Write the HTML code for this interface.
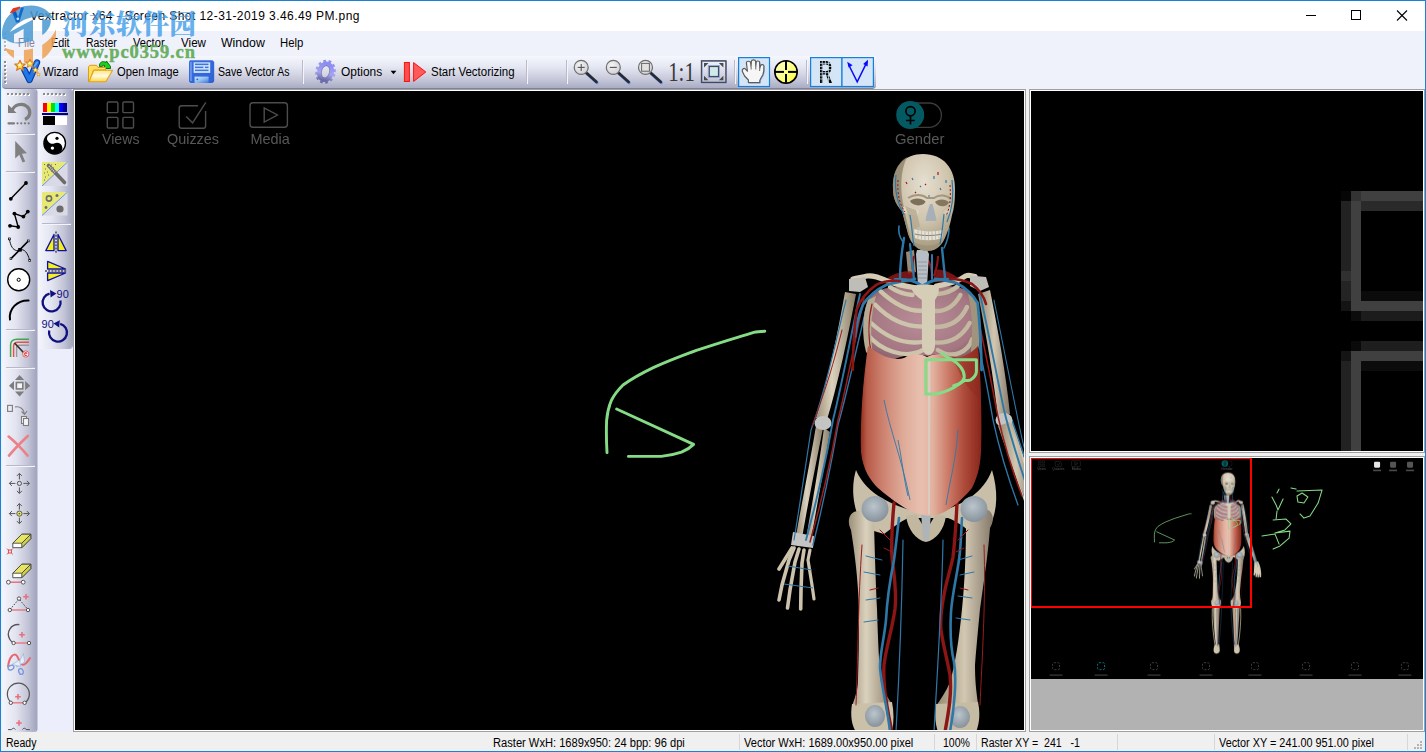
<!DOCTYPE html>
<html lang="en">
<head>
<meta charset="utf-8">
<title>Vextractor x64 - Screen Shot 12-31-2019 3.46.49 PM.png</title>
<style>
html,body{margin:0;padding:0;}
body{width:1426px;height:752px;overflow:hidden;position:relative;background:#eff1fb;font-family:"Liberation Sans","Noto Sans CJK SC",sans-serif;font-size:12px;color:#000;}
.abs{position:absolute;}
#win{position:absolute;left:0;top:0;width:1424px;height:750px;border:1px solid #1883d7;}
#title{position:absolute;left:1px;top:1px;width:1424px;height:30px;background:#fff;}
#menubar{position:absolute;left:1px;top:31px;width:1424px;height:25px;background:#eff1fb;}
#tbrow{position:absolute;left:1px;top:56px;width:1424px;height:33px;background:#eff1fb;}
#tb{position:absolute;left:2px;top:56px;width:874px;height:33px;background:linear-gradient(#f6f7fd 0%,#e4e6f2 35%,#c9cbdc 70%,#a9acc4 100%);border-radius:0 0 4px 4px;border-bottom:1px solid #7f829c;box-sizing:border-box;}
.t{position:absolute;transform-origin:0 0;white-space:nowrap;line-height:14px;height:14px;}
.sep{position:absolute;width:1px;background:#b9bbcc;box-shadow:1px 0 0 #f4f5fb;}
#ltb1{position:absolute;left:2px;top:89px;width:34px;height:643px;border-radius:0 3px 3px 0;box-shadow:1.5px 0 0 #a3a6be;background:linear-gradient(90deg,#f4f5fc 0%,#e2e4f0 40%,#c4c6d8 75%,#a3a6bf 100%);}
#ltb2{position:absolute;left:38px;top:89px;width:34px;height:260px;box-shadow:1px 0 0 #a3a6be;background:linear-gradient(90deg,#f4f5fc 0%,#e2e4f0 40%,#c4c6d8 75%,#a3a6bf 100%);border-radius:0 3px 4px 0;}
#ltbbg{position:absolute;left:1px;top:89px;width:73px;height:643px;background:#eceefb;}
#canvas{position:absolute;left:75px;top:91px;width:949px;height:639px;background:#000;}
#canvasb{position:absolute;left:74px;top:90px;width:951px;height:641px;background:#fff;}
#canvasb0{position:absolute;left:73px;top:89px;width:953px;height:643px;background:#a0a0a0;}
#split{position:absolute;left:1026px;top:89px;width:3px;height:643px;background:#f0f0f0;}
#p1b0{position:absolute;left:1029px;top:89px;width:396px;height:364px;background:#a0a0a0;}
#p1b{position:absolute;left:1030px;top:90px;width:394px;height:362px;background:#fff;}
#p1{position:absolute;left:1031px;top:91px;width:392px;height:360px;background:#000;overflow:hidden;}
#hsplit{position:absolute;left:1029px;top:453px;width:396px;height:3px;background:#f0f0f0;}
#p2b0{position:absolute;left:1029px;top:456px;width:396px;height:276px;background:#a0a0a0;}
#p2b{position:absolute;left:1030px;top:457px;width:394px;height:274px;background:#fff;}
#p2{position:absolute;left:1031px;top:458px;width:392px;height:272px;background:#b2b2b2;overflow:hidden;}
#p2k{position:absolute;left:0;top:0;width:392px;height:221px;background:#000;}
#status{position:absolute;left:1px;top:732px;width:1424px;height:19px;background:#f0f0f0;}
.ssep{position:absolute;top:734px;width:1px;height:16px;background:#d7d7d7;}
svg{position:absolute;left:0;top:0;overflow:visible;}
</style>
</head>
<body>
<div id="title"></div>
<div id="menubar"></div>
<div id="tbrow"></div>
<div id="tb"></div>
<div id="ltbbg"></div>
<div id="ltb1"></div>
<div id="ltb2"></div>
<div id="canvasb0"></div>
<div id="canvasb"></div>
<div id="canvas"></div>
<div id="split"></div>
<div id="p1b0"></div>
<div id="p1b"></div>
<div id="p1"></div>
<div id="hsplit"></div>
<div id="p2b0"></div>
<div id="p2b"></div>
<div id="p2"><div id="p2k"></div></div>
<div id="status"></div><div class="ssep" style="left:739px;"></div><div class="ssep" style="left:934px;"></div><div class="ssep" style="left:976px;"></div><div class="ssep" style="left:1117px;"></div><div class="ssep" style="left:1214px;"></div><div class="ssep" style="left:1407px;"></div><svg width="1426" height="752" viewBox="0 0 1426 752" shape-rendering="crispEdges"><g fill="#b4b4b4"><rect x="1420" y="741" width="2" height="2"/><rect x="1417" y="744" width="2" height="2"/><rect x="1420" y="744" width="2" height="2"/><rect x="1414" y="747" width="2" height="2"/><rect x="1417" y="747" width="2" height="2"/><rect x="1420" y="747" width="2" height="2"/></g></svg>


<!-- MAINGEN-START -->
<svg id="mainsvg" width="1426" height="752" viewBox="0 0 1426 752">
<defs>
<linearGradient id="gBoneL" x1="0" y1="0" x2="1" y2="0"><stop offset="0" stop-color="#9c9078"/><stop offset="0.4" stop-color="#dbd2be"/><stop offset="1" stop-color="#8a7e68"/></linearGradient>
<linearGradient id="gBoneR" x1="0" y1="0" x2="1" y2="0"><stop offset="0" stop-color="#94886f"/><stop offset="0.5" stop-color="#d2c8b2"/><stop offset="1" stop-color="#85796a"/></linearGradient>
<linearGradient id="gAbd" x1="0" y1="0" x2="1" y2="0"><stop offset="0" stop-color="#96301f"/><stop offset="0.05" stop-color="#b85a48"/><stop offset="0.2" stop-color="#cf8674"/><stop offset="0.36" stop-color="#e0ac9a"/><stop offset="0.5" stop-color="#e8c0b0"/><stop offset="0.6" stop-color="#e2b09e"/><stop offset="0.72" stop-color="#cd7c6a"/><stop offset="0.86" stop-color="#ad4a3a"/><stop offset="1" stop-color="#8a261c"/></linearGradient>
<radialGradient id="gSkull" cx="0.5" cy="0.3" r="0.72"><stop offset="0" stop-color="#e6dfd0"/><stop offset="0.55" stop-color="#cfc4ad"/><stop offset="1" stop-color="#a09479"/></radialGradient>
<radialGradient id="gLung" cx="0.5" cy="0.45" r="0.65"><stop offset="0" stop-color="#b88e99"/><stop offset="0.7" stop-color="#a47782"/><stop offset="1" stop-color="#7c5660"/></radialGradient>
<radialGradient id="gCart" cx="0.45" cy="0.4" r="0.7"><stop offset="0" stop-color="#bcc5cc"/><stop offset="1" stop-color="#7e8a94"/></radialGradient>

<clipPath id="cpMain"><rect x="75" y="91" width="949" height="639"/></clipPath>
<clipPath id="cpPrev"><rect x="1031" y="458" width="392" height="221"/></clipPath>
<filter id="fSoft" x="-5%" y="-5%" width="110%" height="110%"><feGaussianBlur stdDeviation="0.55"/></filter>
<g id="scene">
<g id="figure" filter="url(#fSoft)"><g id="figlow">
<path d="M860,730 C858,780 866,850 871,896 L882,896 C882,850 886,780 888,732 Z" fill="url(#gBoneL)"/>
<path d="M942,732 C946,780 948,850 952,896 L963,896 C967,850 972,780 974,730 Z" fill="url(#gBoneR)"/>
<path d="M856,738 C853,790 860,850 867,894" stroke="#a89c84" stroke-width="4" fill="none"/>
<path d="M978,738 C981,790 975,850 968,894" stroke="#a89c84" stroke-width="4" fill="none"/>
<path d="M866,894 L886,894 L888,915 C890,926 884,934 874,934 C864,934 860,926 862,912 Z" fill="#cfc4ac"/>
<path d="M950,894 L970,894 L974,912 C976,926 972,934 962,934 C952,934 948,926 950,915 Z" fill="#cfc4ac"/>
<path d="M880,740 C882,800 880,860 878,900 M956,740 C954,800 956,860 958,900" stroke="#9a1c1c" stroke-width="1.8" fill="none"/>
<path d="M874,740 C872,800 876,860 880,905 M964,740 C966,800 962,860 956,905 M896,734 C894,790 890,850 884,900 M936,734 C938,790 944,850 950,900" stroke="#2f78a8" stroke-width="1.5" fill="none"/>
<path d="M998,424 L1012,420 C1024,458 1038,500 1049,538 L1038,542 C1026,505 1010,462 998,424 Z" fill="url(#gBoneR)"/>
<path d="M1037,540 L1053,536 L1060,552 C1066,570 1068,590 1066,604 L1060,604 L1058,588 L1056,606 L1051,606 L1050,588 L1047,604 L1042,602 L1043,584 L1038,598 L1034,596 C1036,580 1036,560 1037,540 Z" fill="#d6ccb6"/>
<path d="M1008,424 C1020,462 1036,505 1046,545 M1012,420 C1026,462 1044,510 1052,560 M1002,428 C1016,470 1030,510 1040,548" stroke="#2f78a8" stroke-width="1.4" fill="none"/>
</g>
<g id="figtop">
<path d="M845,292 C838,332 828,380 816,418 L826,423 C838,384 848,336 856,294 Z" fill="url(#gBoneL)"/>
<path d="M816,426 C810,462 802,502 796,536 L802,538 C808,502 816,464 823,428 Z" fill="url(#gBoneL)"/>
<path d="M824,428 C819,466 812,504 806,539 L811,540 C817,505 824,468 830,432 Z" fill="url(#gBoneL)"/>
<ellipse cx="823" cy="423" rx="8.5" ry="7" fill="#c4c4c2"/>
<path d="M793,532 L814,536 L813,548 L791,545 Z" fill="#c4c4c2"/>
<g fill="none" stroke="#cdc3ac" stroke-linecap="round" stroke-linejoin="round">
<path d="M794,548 L789,560 L782,585 L779,600" stroke-width="3.6"/>
<path d="M799,549 L795,562 L790,590 L787.5,608" stroke-width="3.6"/>
<path d="M804,550 L802,563 L801,590 L800.7,609" stroke-width="3.6"/>
<path d="M810,550 L808,560 L812,585 L814,599" stroke-width="3.2"/>
<path d="M792,548 L787,556 L779,569" stroke-width="3.6"/>
</g>
<path d="M788,566 L812,570 M784,584 L813,588" stroke="#2f78a8" stroke-width="1.2" fill="none"/>
<path d="M978,294 C986,334 994,380 998,418 L1010,414 C1006,374 998,330 990,290 Z" fill="url(#gBoneR)"/>
<ellipse cx="1004" cy="420" rx="8.5" ry="7" fill="#c4c4c2"/>
<path d="M998,426 C1006,450 1016,476 1026,500 L1034,496 C1026,470 1018,446 1010,422 Z" fill="url(#gBoneR)"/>
<g fill="none" stroke-linecap="round">
<path d="M860,294 C852,330 843,380 833,420 C827,455 817,500 806,540" stroke="#2f78a8" stroke-width="1.9"/>
<path d="M868,302 C858,340 848,390 838,425 C832,460 823,505 813,545" stroke="#2f78a8" stroke-width="1.4"/>
<path d="M864,298 C856,335 847,385 838,420 C832,455 822,500 810,542" stroke="#9a1c1c" stroke-width="1.5"/>
<path d="M846,300 C836,340 826,390 811,430 C805,470 799,510 794,540" stroke="#2f78a8" stroke-width="1.2"/>
<path d="M842,330 C832,370 822,400 812,426" stroke="#9a1c1c" stroke-width="1"/>
<path d="M980,294 C988,330 996,372 1004,410 C1010,435 1018,460 1028,490" stroke="#2f78a8" stroke-width="1.9"/>
<path d="M974,300 C982,335 990,375 997,412 C1003,440 1011,468 1022,496" stroke="#9a1c1c" stroke-width="1.5"/>
<path d="M970,302 C978,340 987,385 993,420 C999,448 1007,475 1018,505" stroke="#2f78a8" stroke-width="1.3"/>
<path d="M994,300 C1002,340 1010,380 1016,410 C1020,430 1024,450 1030,470" stroke="#2f78a8" stroke-width="1.1"/>
</g>
<path d="M856,470 C850,490 854,512 864,528 L884,534 C892,528 900,522 908,518 L948,518 C958,522 966,528 972,534 L990,526 C998,510 998,490 992,470 C984,492 962,508 928,514 C894,508 866,494 856,470 Z" fill="#c9bfa8"/>
<path d="M906,516 C908,530 916,540 926,542 C936,540 944,530 946,516 L936,514 L930,524 L922,524 L916,514 Z" fill="#c2b8a0"/>
<path d="M921,512 L931,512 L929,540 L923,540 Z" fill="#aeb4b8"/>
<path d="M851,530 C846,520 850,510 860,511 L874,524 C875,560 876,590 877,609 C878,640 879,665 881,682 C884,692 888,698 892,704 L852,706 C856,695 858,688 858,679 C859,650 859,630 859,609 C858,580 855,555 851,530 Z" fill="url(#gBoneL)"/>
<path d="M990,528 C996,518 992,508 982,509 L966,524 C966,560 964,590 962,609 C959,640 955,665 950,682 C946,692 940,700 936,706 L978,704 C976,690 975,680 975,665 C977,640 979,620 980,609 C984,580 988,555 990,528 Z" fill="url(#gBoneR)"/>
<ellipse cx="875" cy="509" rx="13.5" ry="13" fill="url(#gCart)"/>
<ellipse cx="974" cy="509" rx="13.5" ry="13" fill="url(#gCart)"/>
<path d="M852,704 C850,716 852,726 856,732 L892,732 C894,722 894,712 892,702 Z" fill="#cbc0a8"/>
<path d="M936,704 C934,716 936,726 938,732 L976,732 C980,722 980,712 978,702 Z" fill="#c6bba3"/>
<ellipse cx="875" cy="716" rx="10" ry="11" fill="url(#gCart)"/>
<ellipse cx="960" cy="717" rx="10" ry="11" fill="url(#gCart)"/>
<g fill="none" stroke-linecap="round" stroke-linejoin="round">
<path d="M894,503 C892,525 891,540 892,557 C894,575 897,592 895,609 C892,630 886,648 884,665 C883,680 886,705 892,732" stroke="#8a1414" stroke-width="3.4"/>
<path d="M957,503 C956,525 955,540 953,557 C950,572 946,582 944,595 C941,610 940,620 941,630 C943,645 947,658 950,675 C952,695 948,715 945,732" stroke="#8a1414" stroke-width="3.4"/>
<path d="M899,518 C897,535 896,545 894,560 C890,580 887,600 886,620 C884,640 880,652 880,668 C882,690 888,710 890,732" stroke="#2f78a8" stroke-width="2.6"/>
<path d="M962,518 C961,535 961,545 959,560 C956,580 952,596 951,612 C950,630 950,645 954,662 C957,680 954,710 950,732" stroke="#2f78a8" stroke-width="2.6"/>
<path d="M903,540 C902,600 900,660 896,732" stroke="#2f78a8" stroke-width="1.2"/>
<path d="M943,540 C942,600 938,660 934,732" stroke="#2f78a8" stroke-width="1.2"/>
<path d="M862,545 C858,600 858,660 856,705 M984,545 C986,600 982,660 980,705" stroke="#9a1c1c" stroke-width="1"/>
<path d="M866,556 L882,560 M864,572 L880,575 M866,600 L880,598 M864,622 L878,620 M972,556 L958,560 M974,572 L960,575 M972,598 L958,596 M970,620 L956,618" stroke="#2f78a8" stroke-width="1"/>
<path d="M880,530 L890,540 M884,548 L892,552 M968,530 L958,540 M964,548 L956,552 M870,590 L878,588 M968,590 L960,588" stroke="#9a1c1c" stroke-width="1"/>
</g>
<path d="M906,252 L914,250 L916,272 L908,274 Z" fill="#b9ae96" opacity="0.8"/>
<path d="M886,279 C896,272 906,270 914,272 L914,282 L888,284 Z M960,279 C950,272 942,268 934,270 L934,282 L958,284 Z" fill="#8a1414" opacity="0.85"/>
<path d="M926,258 C930,262 932,268 932,276 M914,256 C912,262 912,268 914,274 M938,256 C938,264 936,270 934,276" stroke="#8a1414" stroke-width="2.2" fill="none"/>
<path d="M917,250 L927,250 L929,254 L927,286 L918,286 L916,254 Z" fill="#b7bec6"/>
<path d="M918,262 h9 M918,266 h9 M918,270 h9 M918,274 h9 M918,278 h9" stroke="#8d949c" stroke-width="0.9"/>
<g fill="none" stroke="#2f78a8" stroke-linecap="round" stroke-linejoin="round">
<path d="M904,238 C902,250 900,262 900,279" stroke-width="2.4"/>
<path d="M910,244 C911,256 913,268 914,279" stroke-width="2.2"/>
<path d="M932,255 L932,279" stroke-width="2"/>
<path d="M942,248 C943,258 944,268 945,278" stroke-width="2.4"/>
<path d="M895,279.5 C905,279 914,280 919,284 L922,286 L926,284 C932,280 942,279 951,279.5" stroke-width="3"/>
<path d="M899,226 C898,232 900,238 903,242 M949,228 C949,236 947,242 944,248" stroke-width="1.6"/>
</g>
<path d="M868,300 C874,288 896,284 927,287 C956,284 968,288 975,298 C982,314 982,338 976,358 L960,360 C950,353 940,352 928,356 C914,352 900,356 888,362 L868,352 C862,334 862,314 868,300 Z" fill="url(#gLung)"/>
<path d="M912.5,295 Q900,294 890,287" stroke="#cdc4ac" stroke-width="4.4" fill="none" stroke-linecap="round"/>
<path d="M922.5,310.6 Q903,312 880.6,291.3" stroke="#cdc4ac" stroke-width="4.4" fill="none" stroke-linecap="round"/>
<path d="M922.5,326.5 Q896.5,327 875,304.6" stroke="#cdc4ac" stroke-width="4.4" fill="none" stroke-linecap="round"/>
<path d="M922.5,341.8 Q896,346 871,323" stroke="#cdc4ac" stroke-width="4.4" fill="none" stroke-linecap="round"/>
<path d="M923,350 C905,360 880,350 867,333.8" stroke="#cdc4ac" stroke-width="4.4" fill="none" stroke-linecap="round"/>
<path d="M938,294 Q950,293 958,286" stroke="#c3b9a0" stroke-width="4.4" fill="none" stroke-linecap="round"/>
<path d="M935,311 Q951,312 960.4,295" stroke="#c3b9a0" stroke-width="4.4" fill="none" stroke-linecap="round"/>
<path d="M935,327 Q958,327 967,307" stroke="#c3b9a0" stroke-width="4.4" fill="none" stroke-linecap="round"/>
<path d="M935,342.5 Q958,344 969.7,323" stroke="#c3b9a0" stroke-width="4.4" fill="none" stroke-linecap="round"/>
<path d="M937.8,350 C953,360 968,352 972.3,339" stroke="#c3b9a0" stroke-width="4.4" fill="none" stroke-linecap="round"/>
<path d="M868,300 C862,316 862,336 866,352 L874,360 C870,340 870,316 876,296 Z" fill="#b5aa92"/>
<path d="M975,298 C982,314 982,338 976,358 L970,360 C973,338 973,314 968,294 Z" fill="#a0957c"/>
<path d="M912,286 C918,284 932,284 938.4,286 C940,292 937,297 935,300 L935,346 C934,358 923,358 922,346 L921.8,300 C918,297 910,292 912,286 Z" fill="#d6cdb6"/>
<path d="M914,287.5 C904,286 896,284 890,282 C880,278 874,275 867,276 C862,277 858,278 853,279" stroke="#d5ccb5" stroke-width="5.2" fill="none" stroke-linecap="round"/>
<path d="M936.4,286 C944,285 950,283 956.4,281 C962,279 964,276 967,275.5 C970,275 972,276 975,276.5" stroke="#d5ccb5" stroke-width="5.2" fill="none" stroke-linecap="round"/>
<path d="M849,279 L865,277 L868,287 L860,292 L849,291 Z" fill="#bfbdb8"/>
<path d="M970,275.5 L986,277 L989,287 L980,291 L970,286 Z" fill="#bfbdb8"/>
<g fill="none" stroke-linecap="round" stroke-linejoin="round">
<path d="M915,279 C905,281 896,282 887,284.6 C876,290 868,297 863,304.6 C859,315 856,326 855,336.5 M935,279 C944,280 950,281 956.4,283 C966,288 973,295 977.7,303 C980,325 981,345 981.6,370" stroke="#2f78a8" stroke-width="2.8"/>
<path d="M900,281 C890,280 882,282 876.6,284.6 C866,292 860,300 856.6,310 C854,330 853,350 852.7,370 M950,279 C960,279 966,281 972,284 C980,290 984,297 986,304" stroke="#8a1414" stroke-width="2.6"/>
<path d="M872,304 C868,320 868,340 872,356" stroke="#9a1c1c" stroke-width="1.2"/>
</g>
<path d="M868,346 C876,352 890,362 904,358 C912,353 920,353 927,357 C934,353 944,353 952,357 C962,359 972,353 978,346 C981,380 982,420 981,452 C980,470 976,480 972,488 C962,500 950,510 940,514 L929,516 L918,514 C906,510 892,500 878,488 C870,480 863,470 861,452 C860,420 863,380 868,346 Z" fill="url(#gAbd)"/>
<path d="M928,358 L930.5,358 L930,514 L928,515 Z" fill="#d8d0c4" opacity="0.85"/>
<path d="M884,400 C890,430 902,460 910,500 M958,430 C956,460 950,480 946,505 M898,440 C902,460 904,480 908,496" stroke="#2f78a8" stroke-width="1" fill="none" opacity="0.9"/>
<path d="M952,357 C962,359 972,353 978,346 C980,365 981,385 981,400 C972,395 962,380 952,357 Z" fill="#8e2a20" opacity="0.45"/>
<path d="M893,189 C892,166 905,154 923,154 C943,154 956,168 955,191 C955,201 954,209 952,215 C950,226 947,234 944,240 C940,248 934,251 927,251 C918,251 911,244 908,234 C906,226 904,219 902,211 C896,205 893,198 893,189 Z" fill="url(#gSkull)"/>
<path d="M893,189 C892,175 897,163 907,157 C900,172 900,190 904,208 C906,218 908,228 911,240 C908,234 905,222 902,211 C896,205 893,198 893,189 Z" fill="#8e826a" opacity="0.8"/>
<path d="M908,198 C914,194 922,194 927,198 L934,198 C939,194 947,195 951,199" stroke="#a3977e" stroke-width="2" fill="none"/>
<path d="M910,201 C913,197.5 922,197.5 925.5,201.5 C924,206.5 913,207 910,201 Z" fill="#7c6f58"/>
<path d="M935,202 C938,198.5 946,198.5 949,202.5 C947,207.5 938,207.5 935,202 Z" fill="#84775f"/>
<path d="M930,204 C928,210 926,216 925.5,221 L936.5,221 C936,216 934,210 932.5,204 Z" fill="#a7afb8"/>
<path d="M903,207 C908,206 914,208 919,211 L917,216 C912,214 907,213 904,213 Z" fill="#ddd4c0"/>
<path d="M944,211 C947,209 950,208 952,208 L951,214 C949,214 946,215 944,216 Z" fill="#d3c9b2"/>
<path d="M912,240 C918,247 936,248 942,240 C940,247 934,251 927,251 C920,251 914,247 912,240 Z" fill="#9a8e76" opacity="0.7"/>
<path d="M905,206 C908,214 910,222 912,232 L920,226 L916,210 Z" fill="#b5a990" opacity="0.8"/>
<path d="M914,229 C922,232 934,232 943,230 L942,238 C934,241 922,241 915,238 Z" fill="#e4e1d6"/>
<path d="M915,234 C922,236 934,236 942,234" stroke="#7a7260" stroke-width="0.9" fill="none"/>
<path d="M918,230.5 v8 M921.5,231 v8.5 M925,231.5 v8.5 M928.5,231.5 v8.5 M932,231.5 v8.5 M935.5,231 v8.5 M939,230.5 v8" stroke="#a9a595" stroke-width="0.6" fill="none"/>
<path d="M896,175 C894,190 898,205 904,215 M952,180 C954,195 952,210 947,222 M910,215 C912,225 912,235 914,246 M944,214 C943,224 942,234 940,244" stroke="#2f78a8" stroke-width="1.2" fill="none"/>
<path d="M898,180 C897,195 900,205 905,212 M950,185 C951,198 950,208 946,216" stroke="#8a1414" stroke-width="1" fill="none" stroke-dasharray="2 2"/>
<path d="M912,178 l1,2 M920,186 l1,1 M934,176 l0,3 M940,188 l1,2 M928,196 l2,0 M946,180 l0,3" stroke="#2f78a8" stroke-width="1.2"/>
<path d="M906,182 l1,2 M915,192 l1,1 M938,172 l0,3 M925,184 l1,1" stroke="#9a1c1c" stroke-width="1.2"/>
</g></g>
<g id="sceneui"><g fill="none" stroke="#4d4d4d" stroke-width="1.4">
<rect x="107.3" y="102" width="10.6" height="10.6" rx="1.2"/>
<rect x="107.3" y="117.4" width="10.6" height="10.6" rx="1.2"/>
<rect x="122.9" y="102" width="10.6" height="10.6" rx="1.2"/>
<rect x="122.9" y="117.4" width="10.6" height="10.6" rx="1.2"/>
<path d="M205.6,111 L205.6,126 C205.6,127.6 204.6,128.2 203.4,128.2 L181.6,128.2 C180,128.2 179.2,127.4 179.2,126 L179.2,108 C179.2,106.4 180,105.8 181.6,105.8 L198,105.8"/>
<path d="M186.2,116.4 L192.6,122.8 L205.8,102.4"/>
<rect x="250" y="102.8" width="37.4" height="24.4" rx="3"/>
<path d="M264.2,108 L264.2,122 L277.4,115 Z"/>
</g>
<g font-family="'Liberation Sans',sans-serif" font-size="14.2" fill="#585858">
<text x="102" y="144" textLength="37.5" lengthAdjust="spacingAndGlyphs">Views</text>
<text x="167" y="144" textLength="52" lengthAdjust="spacingAndGlyphs">Quizzes</text>
<text x="250.4" y="144" textLength="39.4" lengthAdjust="spacingAndGlyphs">Media</text>
<text x="895" y="144" textLength="49.4" lengthAdjust="spacingAndGlyphs">Gender</text>
</g>
<rect x="897.8" y="103" width="43.6" height="24.4" rx="12.2" fill="none" stroke="#3c3c3c" stroke-width="1.3"/>
<circle cx="910.2" cy="115" r="14" fill="#045a62"/>
<circle cx="910.5" cy="111.2" r="4.6" fill="none" stroke="#000" stroke-width="1.7"/>
<path d="M910.5,116 L910.5,124.6 M906,120.5 L914.8,120.5" stroke="#000" stroke-width="1.7" fill="none"/></g>
<g id="greens"><g fill="none" stroke="#86dc86" stroke-width="2.9" stroke-linecap="round" stroke-linejoin="round">
<path d="M764.8,331.2 C760,331.4 757,331.6 753.8,332.4 C735,338 715,344.4 696.4,350.4 C682,355.6 667,361.4 653.8,367.4 C643,372.6 632,378.6 623,385 C618,390 614,395 611.4,400.4 C608.6,407 607.2,413.6 606.6,420.6 C606.2,431 606.4,442 607,452.6"/>
<path d="M616.6,409 L693.6,444.4 C690,448 686,450.4 681.5,452.2 C675,454.4 668,455.8 661.3,456.4 L628.4,456.4"/>
</g>
<g fill="none" stroke="#86dc86" stroke-width="3" stroke-linejoin="round" stroke-linecap="round">
<path d="M976.4,372 L976.4,359.8 L925.8,359.8 L925.8,394 L935.4,394 C939,393.4 942,392.6 944.8,391.6 C952,389 957,386 961,382.4 L964.2,380.6 C967,380.6 969,380.4 970.8,379.8 C974,377.6 976,375 976.4,372"/>
<path d="M941.4,353.4 C946,356.4 949,358 952,359.8 C956,362 958.6,364.4 960.6,367 C963.4,370.4 964.4,373.6 964.2,377.4 C963.6,380.4 962,382.4 959.6,383.8 L953.6,385.6"/>
</g></g>
</g>
<g id="sceneext"><g fill="none" stroke="#86dc86" stroke-width="4.5" stroke-linecap="round" stroke-linejoin="round">
<path d="M1144,225 L1135,242"/>
<path d="M1113,259 L1131,293 L1139,315 L1161,268"/>
<path d="M1135,319 L1131,354"/>
<path d="M1195,220 L1217,225"/>
<path d="M1221,233 L1329,229 L1312,285 L1277,341 L1251,350 L1234,332"/>
<path d="M1221,255 L1243,242 L1268,259 L1251,285 L1225,281 L1221,255"/>
<path d="M1118,358 L1174,354 L1195,375 L1169,401 L1126,414 L1191,406 L1187,436 L1148,470 L1118,483"/>
<path d="M1070,427 L1126,418 L1144,462"/>
</g><g fill="#6a6a6a">
<rect x="1553" y="107" width="26" height="26" rx="5" fill="#e8e8e8"/>
<rect x="1549" y="141" width="34" height="7" fill="#4a4a4a"/>
<rect x="1622" y="107" width="26" height="26" rx="5" fill="#555"/>
<rect x="1618" y="141" width="34" height="7" fill="#4a4a4a"/>
<rect x="1695" y="107" width="26" height="26" rx="5" fill="#555"/>
<rect x="1691" y="141" width="34" height="7" fill="#4a4a4a"/>
<rect x="168" y="973" width="30" height="30" rx="6" fill="none" stroke="#4a4a4a" stroke-width="3.5" stroke-dasharray="9 6"/>
<rect x="155" y="1023" width="56" height="7" fill="#2c2c2c"/>
<rect x="362" y="973" width="30" height="30" rx="6" fill="none" stroke="#1a8a9a" stroke-width="3.5" stroke-dasharray="9 6"/>
<rect x="349" y="1023" width="56" height="7" fill="#2c2c2c"/>
<rect x="590" y="973" width="30" height="30" rx="6" fill="none" stroke="#4a4a4a" stroke-width="3.5" stroke-dasharray="9 6"/>
<rect x="577" y="1023" width="56" height="7" fill="#2c2c2c"/>
<rect x="814" y="973" width="30" height="30" rx="6" fill="none" stroke="#4a4a4a" stroke-width="3.5" stroke-dasharray="9 6"/>
<rect x="801" y="1023" width="56" height="7" fill="#2c2c2c"/>
<rect x="1025" y="973" width="30" height="30" rx="6" fill="none" stroke="#4a4a4a" stroke-width="3.5" stroke-dasharray="9 6"/>
<rect x="1012" y="1023" width="56" height="7" fill="#2c2c2c"/>
<rect x="1245" y="973" width="30" height="30" rx="6" fill="none" stroke="#4a4a4a" stroke-width="3.5" stroke-dasharray="9 6"/>
<rect x="1232" y="1023" width="56" height="7" fill="#2c2c2c"/>
<rect x="1456" y="973" width="30" height="30" rx="6" fill="none" stroke="#4a4a4a" stroke-width="3.5" stroke-dasharray="9 6"/>
<rect x="1443" y="1023" width="56" height="7" fill="#2c2c2c"/>
<rect x="1671" y="973" width="30" height="30" rx="6" fill="none" stroke="#4a4a4a" stroke-width="3.5" stroke-dasharray="9 6"/>
<rect x="1658" y="1023" width="56" height="7" fill="#2c2c2c"/>
</g></g>
</defs>
<g clip-path="url(#cpMain)"><use href="#scene"/></g>
<g shape-rendering="crispEdges">
<rect x="1341" y="191" width="10" height="10" fill="#060606"/>
<rect x="1341" y="201" width="10" height="70" fill="#222222"/>
<rect x="1341" y="271" width="10" height="10" fill="#303030"/>
<rect x="1341" y="281" width="10" height="20" fill="#242424"/>
<rect x="1341" y="301" width="10" height="10" fill="#141414"/>
<rect x="1351" y="191" width="10" height="10" fill="#333333"/>
<rect x="1351" y="201" width="10" height="110" fill="#404040"/>
<rect x="1351" y="311" width="10" height="10" fill="#0c0c0c"/>
<rect x="1361" y="191" width="62" height="10" fill="#404040"/>
<rect x="1361" y="201" width="62" height="10" fill="#2a2a2a"/>
<rect x="1361" y="291" width="62" height="10" fill="#0b0b0b"/>
<rect x="1361" y="301" width="62" height="10" fill="#404040"/>
<rect x="1361" y="311" width="62" height="10" fill="#1c1c1c"/>
<rect x="1341" y="351" width="10" height="10" fill="#141414"/>
<rect x="1341" y="361" width="10" height="90" fill="#222222"/>
<rect x="1351" y="341" width="10" height="10" fill="#0a0a0a"/>
<rect x="1361" y="341" width="62" height="10" fill="#1e1e1e"/>
<rect x="1351" y="351" width="10" height="100" fill="#404040"/>
<rect x="1361" y="351" width="62" height="10" fill="#404040"/>
<rect x="1361" y="361" width="62" height="10" fill="#0c0c0c"/>
</g>
<g clip-path="url(#cpPrev)"><g transform="translate(1031,458) scale(0.2321) translate(-75,-91)"><use href="#scene"/><use href="#sceneext"/></g></g>
<g clip-path="url(#cpPrev)"><rect x="1031" y="458" width="220" height="149" fill="none" stroke="#ff0000" stroke-width="2" shape-rendering="crispEdges"/></g>
</svg>
<!-- MAINGEN-END -->
<!-- TEXT -->
<span class="t" id="x_title" style="letter-spacing:0.44px;left:30px;top:9px;">Vextractor x64 - Screen Shot 12-31-2019 3.46.49 PM.png</span>
<span class="t" id="x_file" style="transform:scaleX(0.869);left:18px;top:36px;color:#8d8294;">File</span>
<span class="t" id="x_edit" style="transform:scaleX(0.899);left:51px;top:36px;">Edit</span>
<span class="t" id="x_raster" style="transform:scaleX(0.871);left:86px;top:36px;">Raster</span>
<span class="t" id="x_vector" style="transform:scaleX(0.929);left:133px;top:36px;">Vector</span>
<span class="t" id="x_view" style="transform:scaleX(0.969);left:181px;top:36px;">View</span>
<span class="t" id="x_window" style="transform:scaleX(1.026);left:221px;top:36px;">Window</span>
<span class="t" id="x_help" style="transform:scaleX(0.944);left:280px;top:36px;">Help</span>

<span class="t" id="x_wizard" style="transform:scaleX(0.948);left:43px;top:65px;">Wizard</span>
<span class="t" id="x_open" style="transform:scaleX(0.934);left:117px;top:65px;">Open Image</span>
<span class="t" id="x_save" style="transform:scaleX(0.878);left:218px;top:65px;">Save Vector As</span>
<span class="t" id="x_options" style="transform:scaleX(0.994);left:341px;top:65px;">Options</span>
<span class="t" id="x_start" style="transform:scaleX(0.957);left:431px;top:65px;">Start Vectorizing</span>

<span class="t" id="x_ready" style="transform:scaleX(0.876);left:5.5px;top:736px;">Ready</span>
<span class="t" id="x_rwh" style="transform:scaleX(0.9275);left:493px;top:736px;">Raster WxH: 1689x950: 24 bpp: 96 dpi</span>
<span class="t" id="x_vwh" style="transform:scaleX(0.9196);left:744px;top:736px;">Vector WxH: 1689.00x950.00 pixel</span>
<span class="t" id="x_pct" style="transform:scaleX(0.879);left:943px;top:736px;">100%</span>
<span class="t" id="x_rxy" style="transform:scaleX(0.8817);left:981px;top:736px;white-space:pre;">Raster XY =  241   -1</span>
<span class="t" id="x_vxy" style="transform:scaleX(0.9034);left:1219px;top:736px;">Vector XY = 241.00 951.00 pixel</span>

<div class="sep" style="left:302px;top:60px;height:24px;"></div><div class="sep" style="left:526px;top:60px;height:24px;"></div><div class="sep" style="left:566px;top:60px;height:24px;"></div><div class="sep" style="left:734px;top:60px;height:24px;"></div><div class="sep" style="left:806px;top:60px;height:24px;"></div>
<!-- TOP ICONS -->
<svg id="topsvg" width="1426" height="90" viewBox="0 0 1426 90">
<defs>
<linearGradient id="gFold" x1="0" y1="0" x2="0" y2="1"><stop offset="0" stop-color="#ffe98a"/><stop offset="0.5" stop-color="#fffbe0"/><stop offset="1" stop-color="#ffd640"/></linearGradient>
<linearGradient id="gV" x1="0" y1="0" x2="1" y2="0"><stop offset="0" stop-color="#0a3fb0"/><stop offset="0.5" stop-color="#2d8cf0"/><stop offset="1" stop-color="#0a3fb0"/></linearGradient>
<linearGradient id="gGear" x1="0" y1="0" x2="0" y2="1"><stop offset="0" stop-color="#8c8cf2"/><stop offset="0.6" stop-color="#a4a4f0"/><stop offset="1" stop-color="#6c6ca8"/></linearGradient>
<linearGradient id="gSave" x1="0" y1="0" x2="1" y2="1"><stop offset="0" stop-color="#3a6ee0"/><stop offset="1" stop-color="#2f62d4"/></linearGradient>
<linearGradient id="gShut" x1="0" y1="0" x2="1" y2="1"><stop offset="0" stop-color="#cfe6fb"/><stop offset="0.5" stop-color="#8fbef2"/><stop offset="1" stop-color="#3e74dc"/></linearGradient>
<radialGradient id="gLens" cx="0.4" cy="0.35" r="0.7"><stop offset="0" stop-color="#f4f4f4"/><stop offset="1" stop-color="#cfcfd4"/></radialGradient>
<pattern id="pDots" width="3.15" height="3.15" patternUnits="userSpaceOnUse" x="819.4" y="60.4"><rect x="0.3" y="0.3" width="2.5" height="2.5" fill="#000"/></pattern>
<g id="mag"><line x1="5" y1="5.3" x2="15.3" y2="14.6" stroke="#7fa4ff" stroke-width="3.4" stroke-linecap="round" transform="translate(0.6,0.8)"/><line x1="5" y1="5.3" x2="15.3" y2="14.6" stroke="#2a2a2a" stroke-width="2.8" stroke-linecap="round"/><circle cx="0" cy="0" r="7" fill="url(#gLens)" stroke="#6e6e6e" stroke-width="1.2"/></g>
<g id="star"><path d="M0,-5 L1.5,-1.6 L5,-1.4 L2.3,1 L3.2,4.6 L0,2.6 L-3.2,4.6 L-2.3,1 L-5,-1.4 L-1.5,-1.6 Z" fill="#ffe14a" stroke="#d9771a" stroke-width="1.1" stroke-linejoin="round"/><circle cx="-0.4" cy="-0.6" r="1.3" fill="#fffbd0"/></g>
</defs>

<g shape-rendering="crispEdges"><g fill="#fff"><rect x="5" y="34" width="2" height="2"/><rect x="5" y="38" width="2" height="2"/><rect x="5" y="42" width="2" height="2"/><rect x="5" y="46" width="2" height="2"/><rect x="5" y="50" width="2" height="2"/></g><g fill="#b4b4c2"><rect x="4" y="33" width="2" height="2"/><rect x="4" y="37" width="2" height="2"/><rect x="4" y="41" width="2" height="2"/><rect x="4" y="45" width="2" height="2"/><rect x="4" y="49" width="2" height="2"/></g></g>
<!-- watermark logo -->
<g opacity="0.86">
<path d="M2.4,39 C-0.5,21 13,5.5 31,5.5 C42,5.5 50,11 53,19 C47,16.5 40,15.5 33,17 C21,19.5 10,27 6.5,39.8 Z" fill="#4a9ad3"/>
<path d="M33,19.5 L33,40 C28,42.6 20,43.8 15.3,43.3 C12.6,43 10.4,42.4 9,41.6 C7,40.4 5.8,39.2 5.5,38 L6,34 Z M23.6,29 L23.6,42 L14,42.4 L14,34.2 Z" fill="#4a9ad3" fill-rule="evenodd"/>
<path d="M42.2,19.4 L50.6,19.4 C51.6,24 48,31 42.8,34.7 L42.2,34.7 Z" fill="#4a9ad3"/>
<path d="M4.3,47.5 C7.4,48.9 10.6,49.7 14,50.2 L14,58.2 C9.6,55.6 6.2,52 4.3,47.5 Z" fill="#f0a254"/>
<path d="M23.9,50.1 C27,49.9 30,49.4 33,48.6 L33,62 C30,62.8 27,62.9 23.9,62.4 Z" fill="#f0a254"/>
<path d="M42.2,44.9 C49,40.5 54,35 55.7,29.2 C57.5,40 52,53 42.2,59 Z" fill="#f0a254"/>
</g>
<!-- app icon -->
<g>
<path d="M12.2,12.4 L15.2,11.2 L17.8,18.4 L21,7.4 L24,7.6 L19.2,22.4 L16,22.6 Z" fill="#0f6bd0"/>
<path d="M14,12 L16,11.2 L18,17 L17,20 Z" fill="#0a4fa6" opacity="0.7"/>
<path d="M9.6,13.2 L13,8.2 L20,6.6 L20.4,8 L13.4,12.4 Z" fill="#e8341c"/>
<circle cx="17.8" cy="18.8" r="1.4" fill="#cfe0ff"/>
</g>
<!-- watermark text -->
<text x="62" y="34" font-family="'Liberation Serif','Noto Serif CJK SC',serif" font-weight="900" font-size="27" textLength="134" lengthAdjust="spacingAndGlyphs" fill="#3d9be9" fill-opacity="0.8" stroke="#fff" stroke-opacity="0.18" stroke-width="1.2" paint-order="stroke">河东软件园</text>
<text x="62" y="58.4" font-family="'Liberation Serif',serif" font-weight="bold" font-size="18.5" textLength="133" lengthAdjust="spacing" fill="#5aa84f" fill-opacity="0.88" stroke="#5aa84f" stroke-opacity="0.8" stroke-width="0.5">www.pc0359.cn</text>

<!-- window controls -->
<g stroke="#000" stroke-width="1" fill="none" shape-rendering="crispEdges">
<line x1="1306" y1="15.5" x2="1316" y2="15.5"/>
<rect x="1351.5" y="10.5" width="9" height="9"/>
</g>
<g stroke="#000" stroke-width="1.1" fill="none"><line x1="1397" y1="10.5" x2="1407" y2="20.5"/><line x1="1407" y1="10.5" x2="1397" y2="20.5"/></g>

<!-- grips -->
<g shape-rendering="crispEdges"><g fill="#fff"><rect x="5" y="62" width="2" height="2"/><rect x="5" y="66" width="2" height="2"/><rect x="5" y="70" width="2" height="2"/><rect x="5" y="74" width="2" height="2"/><rect x="5" y="78" width="2" height="2"/><rect x="5" y="82" width="2" height="2"/></g><g fill="#8b8b93"><rect x="4" y="61" width="2" height="2"/><rect x="4" y="65" width="2" height="2"/><rect x="4" y="69" width="2" height="2"/><rect x="4" y="73" width="2" height="2"/><rect x="4" y="77" width="2" height="2"/><rect x="4" y="81" width="2" height="2"/></g></g>

<!-- wizard icon -->
<g>
<path d="M24.5,70 L29.5,80 L37,62.5" fill="none" stroke="#083a9e" stroke-width="6.4" stroke-linecap="round" stroke-linejoin="round"/>
<path d="M24.5,70 L29.5,80 L37,62.5" fill="none" stroke="#1f78e6" stroke-width="4.2" stroke-linecap="round" stroke-linejoin="round"/>
<path d="M34.5,66 L37,62.5" fill="none" stroke="#55a8ff" stroke-width="2" stroke-linecap="round"/>
<use href="#star" transform="translate(20,65.5) scale(1.05)"/>
<use href="#star" transform="translate(30,63.5) scale(0.85)"/>
<use href="#star" transform="translate(35.5,70) scale(0.6)"/>
<use href="#star" transform="translate(38.5,74.5) scale(0.38)"/>
</g>

<!-- open folder -->
<g>
<path d="M99.5,66.5 C99,62 103,60.5 106,62.5 L106.5,61 L110.5,66.5 L110.5,68.5 L103.5,68.5 L103.5,67 L105,66 C103.5,64.5 102,65 102,67 Z" fill="#19d21f" stroke="#0a6b10" stroke-width="1" stroke-linejoin="round"/>
<path d="M88.5,81.5 L88.5,66.5 L90,65.3 L96.5,65.3 L98,67.5 L105.5,67.5 L105.5,70 L93.5,70 L89.5,81.5 Z" fill="#ffe060" stroke="#e39b12" stroke-width="1"/>
<path d="M93.8,70.3 L112.6,70.3 L105.8,81.7 L89,81.7 Z" fill="url(#gFold)" stroke="#e8a21a" stroke-width="1.1" stroke-linejoin="round"/>
</g>

<!-- save icon -->
<g>
<path d="M190,60.3 L212.5,60.3 L214.2,62 L214.2,81.5 L212.5,83 L190.5,83 L189,81.5 L189,61.5 Z" fill="url(#gSave)"/>
<rect x="190.3" y="62" width="1.3" height="19" fill="#8fb6f5" opacity="0.8"/>
<rect x="193.6" y="62.3" width="16.6" height="10.6" fill="#cfe4fb"/>
<rect x="195" y="63.6" width="13.5" height="1.5" fill="#3f74dc"/>
<rect x="195" y="66.6" width="8.4" height="1.5" fill="#3f74dc"/><rect x="205" y="66.6" width="3.5" height="1.5" fill="#3f74dc"/>
<rect x="195" y="69.6" width="13.5" height="1.5" fill="#3f74dc"/>
<rect x="194.6" y="76.6" width="14" height="6.4" fill="url(#gShut)"/>
<circle cx="197.3" cy="79.3" r="0.9" fill="#2a5ed0"/>
</g>

<!-- options gear -->
<g transform="translate(325.5,71.8) rotate(14)">
<ellipse cx="0" cy="0" rx="8.6" ry="10.6" fill="none" stroke="url(#gGear)" stroke-width="3.2" stroke-dasharray="2.6 2.45"/>
<ellipse cx="0" cy="0" rx="6.2" ry="8.2" fill="none" stroke="url(#gGear)" stroke-width="4.4"/>
<ellipse cx="0" cy="0" rx="4" ry="6.2" fill="none" stroke="#6a6a9a" stroke-width="0.8" opacity="0.7"/>
</g>
<path d="M390.6,70.8 L396.4,70.8 L393.5,74.2 Z" fill="#000"/>

<!-- start vectorizing -->
<rect x="404.4" y="62.5" width="5" height="19" fill="#ff5050" stroke="#ff1010" stroke-width="1"/>
<path d="M413.6,62.6 L425.8,72 L413.6,81.4 Z" fill="#ff5a5a" stroke="#ff1010" stroke-width="1" stroke-linejoin="round"/>

<!-- zoom icons -->
<use href="#mag" transform="translate(581.2,67.4)"/>
<g stroke="#555" stroke-width="1.1"><line x1="577.7" y1="67.4" x2="584.7" y2="67.4"/><line x1="581.2" y1="63.9" x2="581.2" y2="70.9"/></g>
<use href="#mag" transform="translate(613.3,67.4)"/>
<line x1="609.8" y1="67.4" x2="616.8" y2="67.4" stroke="#555" stroke-width="1.1"/>
<use href="#mag" transform="translate(645.5,67.4)"/>
<rect x="641.6" y="63.4" width="7.8" height="7.8" fill="#e2e2e2" stroke="#666" stroke-width="1"/>
<text x="668.2" y="80.8" font-family="'Liberation Serif',serif" font-size="26.5" textLength="26.6" lengthAdjust="spacingAndGlyphs" fill="#3a3a3a">1:1</text>
<!-- fit -->
<g>
<rect x="701.5" y="60.8" width="24.4" height="21.6" fill="none" stroke="#7fa4ff" stroke-width="1" transform="translate(0.5,0.6)"/>
<rect x="701.5" y="60.8" width="24.4" height="21.6" fill="none" stroke="#4a4a4a" stroke-width="1.3"/>
<rect x="709.2" y="66.4" width="9.4" height="10.2" fill="#cfeaea" stroke="#4a4a4a" stroke-width="1.4"/>
<rect x="708.2" y="65.4" width="11.4" height="12.2" fill="none" stroke="#7fa4ff" stroke-width="0.8" opacity="0.8"/>
<g fill="#4a4a4a"><path d="M704,63 L708.5,63 L704,67.5 Z"/><path d="M723.4,63 L718.9,63 L723.4,67.5 Z"/><path d="M704,80.2 L708.5,80.2 L704,75.7 Z"/><path d="M723.4,80.2 L718.9,80.2 L723.4,75.7 Z"/></g>
</g>

<!-- hand button -->
<rect x="738.6" y="57.6" width="30.9" height="28.9" fill="#d3e5f6" stroke="#1480dc" stroke-width="1.2"/>
<path d="M748.4,82.6 L748.4,80 L744.6,76 L742.4,71.6 C741.8,69.4 743.6,67.8 745.2,68.8 L747.4,71.2 L746.4,62.6 C746.4,60.8 750.4,60.8 750.6,62.6 L751,66 L751.4,61.2 C751.6,59.4 755.4,59.4 755.6,61.2 L755.8,66 L756.2,62.2 C756.4,60.6 759.4,60.6 759.6,62.4 L759.8,68 L760.6,65.6 C761.2,64 764,64.4 763.9,66.2 L763.8,71 L763,74.5 L761,78 L759.8,80.4 L759.8,82.6 Z" fill="#8fb0ff" opacity="0.8" transform="translate(1,0.8)"/>
<path d="M748.4,82.6 L748.4,80 L744.6,76 L742.4,71.6 C741.8,69.4 743.6,67.8 745.2,68.8 L747.4,71.2 L746.4,62.6 C746.4,60.8 750.4,60.8 750.6,62.6 L751,66 L751.4,61.2 C751.6,59.4 755.4,59.4 755.6,61.2 L755.8,66 L756.2,62.2 C756.4,60.6 759.4,60.6 759.6,62.4 L759.8,68 L760.6,65.6 C761.2,64 764,64.4 763.9,66.2 L763.8,71 L763,74.5 L761,78 L759.8,80.4 L759.8,82.6 Z" fill="#f6f6f6" stroke="#5c5c5c" stroke-width="1.2" stroke-linejoin="round"/>
<path d="M751,66 L751.2,69.5 M755.8,66 L755.8,69.5 M759.8,68 L759.6,71" stroke="#6a6a6a" stroke-width="1" fill="none"/>

<!-- crosshair -->
<defs><linearGradient id="gYel" x1="0" y1="0" x2="1" y2="1"><stop offset="0" stop-color="#ffffc8"/><stop offset="0.5" stop-color="#ffff8c"/><stop offset="1" stop-color="#ffff30"/></linearGradient></defs>
<circle cx="786" cy="71.9" r="11.2" fill="url(#gYel)" stroke="#000" stroke-width="1.6"/>
<g stroke="#000" stroke-width="2"><line x1="775" y1="71.9" x2="784" y2="71.9"/><line x1="788" y1="71.9" x2="797" y2="71.9"/><line x1="786" y1="61" x2="786" y2="69.9"/><line x1="786" y1="73.9" x2="786" y2="82.8"/></g>

<!-- R / V buttons -->
<rect x="810.6" y="57.6" width="31.4" height="28.9" fill="#d3e5f6" stroke="#1480dc" stroke-width="1.2"/>
<rect x="842" y="57.6" width="31.4" height="28.9" fill="#d3e5f6" stroke="#1480dc" stroke-width="1.2"/>
<text x="818.8" y="82.5" font-family="'Liberation Sans',sans-serif" font-weight="bold" font-size="30.5" textLength="13.6" lengthAdjust="spacingAndGlyphs" fill="#000" style="will-change:opacity;-webkit-font-smoothing:antialiased">R</text><g stroke="#d3e5f6" stroke-width="0.75"><line x1="822.25" y1="59" x2="822.25" y2="84"/><line x1="825.40" y1="59" x2="825.40" y2="84"/><line x1="828.55" y1="59" x2="828.55" y2="84"/><line x1="818" y1="63.33" x2="834" y2="63.33"/><line x1="818" y1="66.46" x2="834" y2="66.46"/><line x1="818" y1="69.59" x2="834" y2="69.59"/><line x1="818" y1="72.72" x2="834" y2="72.72"/><line x1="818" y1="75.85" x2="834" y2="75.85"/><line x1="818" y1="78.98" x2="834" y2="78.98"/></g>
<g stroke="#0a0aff" stroke-width="1.5" fill="none" stroke-linecap="round"><path d="M848.8,65 L857.2,81.8 L866.8,62.4"/></g>
<path d="M847.2,61.8 L852.6,65.2 L848.6,67.6 Z" fill="#0a0aff"/><path d="M868,59.8 L867.6,66.6 L863.2,64 Z" fill="#0a0aff"/>
</svg>


<!-- LEFT ICONS -->
<svg id="leftsvg" width="75" height="752" viewBox="0 0 75 752">
<defs>
<g id="gripH" shape-rendering="crispEdges"><g fill="#fff"><rect x="1" y="1" width="2" height="2"/><rect x="5" y="1" width="2" height="2"/><rect x="9" y="1" width="2" height="2"/><rect x="13" y="1" width="2" height="2"/><rect x="17" y="1" width="2" height="2"/><rect x="21" y="1" width="2" height="2"/></g><g fill="#8b8b93"><rect x="0" y="0" width="2" height="2"/><rect x="4" y="0" width="2" height="2"/><rect x="8" y="0" width="2" height="2"/><rect x="12" y="0" width="2" height="2"/><rect x="16" y="0" width="2" height="2"/><rect x="20" y="0" width="2" height="2"/></g></g>
<g id="lsep" shape-rendering="crispEdges"><rect x="0" y="0" width="29" height="1" fill="#b7b9ca"/><rect x="0" y="1" width="29" height="1" fill="#f4f5fb"/></g>
<g id="plus"><path d="M-2.8,0 L2.8,0 M0,-2.8 L0,2.8" stroke="#e8707c" stroke-width="1.6" fill="none"/></g>
<g id="mvp"><g stroke="#555" stroke-width="1" fill="none"><path d="M-10,0 L-4,0 M10,0 L4,0 M0,-10 L0,-4 M0,10 L0,4"/><path d="M-7.5,-2.5 L-10,0 L-7.5,2.5 M7.5,-2.5 L10,0 L7.5,2.5 M-2.5,-7.5 L0,-10 L2.5,-7.5 M-2.5,7.5 L0,10 L2.5,7.5"/></g></g>
<g id="eraser"><path d="M0,9 L9,0 L18,0 L18,4.5 L9,13.5 L0,13.5 Z" fill="#fff" stroke="#444" stroke-width="0.9" stroke-linejoin="round"/><path d="M0,9 L9,0 L18,0 L9,9 Z" fill="#e6e660" stroke="#444" stroke-width="0.9" stroke-linejoin="round"/><path d="M9,9 L18,0 L18,4.5 L9,13.5 Z" fill="#d0d050" stroke="#444" stroke-width="0.9" stroke-linejoin="round"/></g>
</defs>

<use href="#gripH" x="7" y="93"/>
<use href="#gripH" x="43" y="93"/>

<!-- undo -->
<g fill="none" stroke="#7d7d7d">
<path d="M12,111 C14,104.5 22,102.5 27,106.5 C31.5,110.5 30.5,117 25,119.5" stroke-width="3.2"/>
<path d="M8,104.5 L8,113 L16.5,113 Z" fill="#7d7d7d" stroke="none"/>
<path d="M8.5,123.3 L14,123.3" stroke-width="2.2" stroke-linecap="round"/>
<path d="M17.5,123.3 L30,123.3" stroke-width="2.2" stroke-linecap="round" stroke-dasharray="0.1 3.6"/>
</g>
<use href="#lsep" x="6" y="133"/>
<!-- arrow cursor -->
<path d="M15.2,141 L15.2,158.5 L19.3,154.7 L22.6,162.6 L25.2,161.4 L22,153.8 L27,153.3 Z" fill="#808080"/>
<use href="#lsep" x="6" y="171"/>
<!-- line -->
<g stroke="#000" fill="#000"><line x1="10.8" y1="198.8" x2="26" y2="183" stroke-width="1.4"/><circle cx="10.8" cy="198.8" r="1.9" stroke="none"/><circle cx="26" cy="183" r="1.9" stroke="none"/></g>
<!-- polyline -->
<g stroke="#000" fill="#000"><path d="M10,225.8 L18.2,227 L14.4,213.6 L23.4,216.6 L27.8,211.6" fill="none" stroke-width="1.4"/><circle cx="10" cy="225.8" r="1.9" stroke="none"/><circle cx="18.2" cy="227" r="1.9" stroke="none"/><circle cx="14.4" cy="213.6" r="1.9" stroke="none"/><circle cx="23.4" cy="216.6" r="1.9" stroke="none"/><circle cx="27.8" cy="211.6" r="1.9" stroke="none"/></g>
<!-- spline -->
<g stroke="#000" fill="none"><path d="M9.4,239 C10.5,246 13,250 16.5,250.5 C18,250.5 19,250.2 20,249.8 C24,248.8 27.5,252 29.7,260.5" stroke-width="0.9"/>
<line x1="11" y1="258.7" x2="28.3" y2="241" stroke-width="1.7"/>
<rect x="18.2" y="248" width="3.6" height="3.6" fill="#000" stroke="none"/>
<g stroke-width="0.7" fill="#fff"><rect x="8.6" y="238" width="1.8" height="1.8"/><rect x="27.4" y="240" width="1.8" height="1.8"/><rect x="10" y="257.8" width="1.8" height="1.8"/><rect x="28.8" y="259.6" width="1.8" height="1.8"/></g></g>
<!-- circle -->
<circle cx="18.7" cy="279.8" r="11" fill="#fff" stroke="#000" stroke-width="1.4"/><circle cx="18.7" cy="279.8" r="1.6" fill="#fff" stroke="#000" stroke-width="1"/>
<!-- arc -->
<path d="M10,319.5 C8.5,309 17,300 28.6,300.4" fill="none" stroke="#000" stroke-width="2" stroke-linecap="round"/>
<use href="#lsep" x="6" y="329"/>
<!-- offset/multicolor -->
<g fill="none" stroke-width="1.5"><path d="M10.6,357 L10.6,345 C10.6,341 13,339.2 17,339.2 L29,339.2" stroke="#3fa64a"/><path d="M13.6,357 L13.6,346 C13.6,343.2 15,342.2 18,342.2 L29,342.2" stroke="#e85050"/><path d="M16.6,357 L16.6,347.5 C16.6,345.6 17.6,345.2 19.5,345.2 L29,345.2" stroke="#9a9a9a"/><path d="M14.5,343 L23.5,352.5" stroke="#333" stroke-width="1.8"/></g>
<circle cx="25.8" cy="354" r="3.1" fill="#fff" stroke="#e04040" stroke-width="0.8"/><text x="24" y="356.2" font-family="'Liberation Sans',sans-serif" font-size="6.5" font-weight="bold" fill="#d02020">e</text>
<use href="#lsep" x="6" y="367"/>
<!-- move -->
<g fill="#7d7d7d"><path d="M19.6,375 L24.2,380 L15,380 Z"/><path d="M19.6,396.4 L24.2,391.4 L15,391.4 Z"/><path d="M9,385.7 L14,381.1 L14,390.3 Z"/><path d="M30.2,385.7 L25.2,381.1 L25.2,390.3 Z"/></g><rect x="16.4" y="382.5" width="6.4" height="6.4" fill="#f4f4fa" stroke="#7d7d7d" stroke-width="1.6"/>
<!-- copy -->
<g fill="none" stroke="#7d7d7d" stroke-width="1.1"><rect x="7.6" y="405.4" width="4.8" height="6"/><rect x="21.5" y="416.5" width="5" height="7" fill="#f4f4fa"/><rect x="23.5" y="418.5" width="5" height="7" fill="#f4f4fa"/><path d="M15,407 C20,406 24,409 24.5,414 M21.6,411.5 L24.6,414.4 L27,411"/></g>
<!-- delete X -->
<g stroke="#ec8088" stroke-width="2.6" stroke-linecap="round" fill="none"><path d="M8.6,436.6 C14,441 22,449 27.6,455.6"/><path d="M27.8,436 C22,441.5 14,449.5 9,455.6"/></g>
<use href="#lsep" x="6" y="465"/>
<!-- move points -->
<use href="#mvp" x="19.4" y="483.4"/><circle cx="19.4" cy="483.4" r="2.1" fill="none" stroke="#555" stroke-width="1"/>
<use href="#mvp" x="19.4" y="513.6"/><circle cx="19.4" cy="513.6" r="2.6" fill="#f0f060" stroke="#555" stroke-width="1"/><circle cx="19.4" cy="513.6" r="0.9" fill="#555"/>
<!-- erasers -->
<use href="#eraser" x="12.8" y="534.2"/>
<g stroke="#d84040" stroke-width="0.9" fill="none"><rect x="8.4" y="550" width="3" height="3"/><path d="M7,548.6 L8.4,550 M12.8,548.6 L11.4,550 M7,554.4 L8.4,553 M12.8,554.4 L11.4,553"/></g>
<use href="#eraser" x="12.8" y="564.2"/>
<line x1="10" y1="582.2" x2="21.5" y2="582.2" stroke="#e86068" stroke-width="1.3"/><circle cx="8.4" cy="582.2" r="1.9" fill="#fff" stroke="#444" stroke-width="0.9"/><circle cx="23.2" cy="582.2" r="1.9" fill="#fff" stroke="#444" stroke-width="0.9"/>
<!-- triangle add -->
<path d="M10,609.6 L19,599 L28,609.6" fill="none" stroke="#444" stroke-width="1" stroke-dasharray="1.6 1.4"/><line x1="11.4" y1="610" x2="26.6" y2="610" stroke="#e87078" stroke-width="1.3"/>
<circle cx="9.8" cy="610" r="1.7" fill="#fff" stroke="#444" stroke-width="0.9"/><circle cx="28" cy="610" r="1.7" fill="#fff" stroke="#444" stroke-width="0.9"/><circle cx="19" cy="598.6" r="1.7" fill="#fff" stroke="#444" stroke-width="0.9"/>
<use href="#plus" x="26" y="596.8"/>
<!-- arc add -->
<path d="M19.4,624.6 C11,623.6 6,632 9.6,639 C10.4,640.6 11.6,641.8 13,642.6" fill="none" stroke="#555" stroke-width="1.3"/>
<line x1="15" y1="643" x2="27.4" y2="643" stroke="#e87078" stroke-width="1.3"/><circle cx="13.6" cy="643" r="1.7" fill="#fff" stroke="#444" stroke-width="0.9"/><circle cx="29" cy="643" r="1.7" fill="#fff" stroke="#444" stroke-width="0.9"/>
<use href="#plus" x="22" y="634.8"/>
<!-- scissors -->
<g fill="none"><path d="M8,667 C9,657 14,652 17,656 C20,661 21,667 25,664 C28,662 29,659 30.6,657.4" stroke="#e86670" stroke-width="2"/>
<path d="M16.6,667 L23.4,653.6 L24.6,662 Z" fill="#e8eef8" stroke="#9ab0d8" stroke-width="0.7"/><path d="M12,664.5 L19.6,660 L20.6,666.4 Z" fill="#e8eef8" stroke="#9ab0d8" stroke-width="0.7"/>
<ellipse cx="11" cy="667.6" rx="3" ry="2.2" stroke="#7d9ae0" stroke-width="1.4" transform="rotate(-25 11 667.6)"/><ellipse cx="21" cy="671.4" rx="2.2" ry="3" stroke="#7d9ae0" stroke-width="1.4" transform="rotate(-20 21 671.4)"/></g>
<!-- circle add -->
<path d="M11.2,702.4 A11,11 0 1 1 25,702.8" fill="none" stroke="#555" stroke-width="1.2"/>
<line x1="12.4" y1="702.8" x2="23" y2="702.8" stroke="#e87078" stroke-width="1.3"/><circle cx="10.8" cy="702.8" r="1.7" fill="#fff" stroke="#444" stroke-width="0.9"/><circle cx="24.6" cy="702.8" r="1.7" fill="#fff" stroke="#444" stroke-width="0.9"/>
<use href="#plus" x="18" y="696.8"/>
<!-- last partial -->
<use href="#plus" x="19" y="723"/>
<path d="M8,729.6 L11.6,729.6 C12.4,727.8 14.4,727.8 15.4,729.6 M22.4,729.6 C23.4,727.8 25.4,727.8 26.2,729.6 L29.8,729.6" fill="none" stroke="#444" stroke-width="0.9"/>

<!-- toolbar 2 -->
<g shape-rendering="crispEdges">
<rect x="43" y="103" width="4" height="9" fill="#ff0000"/><rect x="47" y="103" width="4" height="9" fill="#ffff00"/><rect x="51" y="103" width="4" height="9" fill="#00e000"/><rect x="55" y="103" width="4" height="9" fill="#00ffff"/><rect x="59" y="103" width="4" height="9" fill="#0000ff"/><rect x="63" y="103" width="4" height="9" fill="#000090"/>
<rect x="42" y="113" width="26" height="2" fill="#000090"/>
<rect x="43" y="116" width="12" height="9" fill="#000"/><rect x="55" y="116" width="12" height="9" fill="#fff"/>
</g>
<!-- yin yang -->
<g><circle cx="54.7" cy="143.2" r="10.8" fill="#fff" stroke="#000" stroke-width="1.3"/>
<path d="M54.7,132.4 A10.8,10.8 0 0 0 54.7,154 A5.4,5.4 0 0 0 54.7,143.2 A5.4,5.4 0 0 1 54.7,132.4 Z" fill="#000" transform="rotate(-25 54.7 143.2)"/>
<circle cx="57" cy="138.3" r="1.6" fill="#000"/><circle cx="52.4" cy="148.1" r="1.7" fill="#fff"/></g>
<!-- despeckle 1 -->
<g><rect x="42" y="162" width="25.5" height="24" fill="#d9dae6"/><path d="M42,162 L67.5,162 L42,186 Z" fill="#e8e874"/><line x1="67.5" y1="162" x2="42" y2="186" stroke="#5b8cff" stroke-width="0.9"/>
<path d="M44,164.5 h1 M47,166 h1 M45,169 h1 M49,168 h1 M44,173 h1 M47,172 h1 M51,165 h1 M45,177 h1 M48,175 h1 M53,168 h1 M51,171 h1 M44,180 h1 M55,164.5 h1" stroke="#666" stroke-width="1"/>
<line x1="48.5" y1="165.5" x2="64.5" y2="182.5" stroke="#6c6c6c" stroke-width="3.6" stroke-linecap="round"/><line x1="49" y1="166" x2="55" y2="172.4" stroke="#d8d8d8" stroke-width="1.6" stroke-dasharray="1 1"/></g>
<!-- despeckle 2 -->
<g><rect x="42" y="192" width="25.5" height="23.5" fill="#d9dae6"/><path d="M42,192 L67.5,192 L42,215.5 Z" fill="#e8e874"/><line x1="67.5" y1="192" x2="42" y2="215.5" stroke="#5b8cff" stroke-width="0.9"/>
<circle cx="49" cy="198.5" r="2.6" fill="none" stroke="#6c6c6c" stroke-width="1.6"/><circle cx="57" cy="195.5" r="1.5" fill="#6c6c6c"/><circle cx="46" cy="207.5" r="1.4" fill="#6c6c6c"/><circle cx="60" cy="209" r="3.6" fill="#6c6c6c"/></g>
<use href="#lsep" x="42" y="223"/>
<!-- mirror H -->
<g><path d="M54,234.5 L54,250.6 L45.8,250.6 Z" fill="#f4f020" stroke="#1010a0" stroke-width="1.3" stroke-linejoin="round"/><path d="M58,234.5 L58,250.6 L66.2,250.6 Z" fill="#f4f020" stroke="#1010a0" stroke-width="1.3" stroke-linejoin="round"/><line x1="56" y1="231.5" x2="56" y2="253" stroke="#000" stroke-width="1" stroke-dasharray="2 1.2"/></g>
<!-- mirror V -->
<g><path d="M47.6,269 L65.6,269 L47.6,261.4 Z" fill="#f4f020" stroke="#1010a0" stroke-width="1.3" stroke-linejoin="round"/><path d="M47.6,273 L65.6,273 L47.6,280.6 Z" fill="#f4f020" stroke="#1010a0" stroke-width="1.3" stroke-linejoin="round"/><line x1="45" y1="271" x2="67" y2="271" stroke="#000" stroke-width="1" stroke-dasharray="2 1.2"/></g>
<!-- rotate cw -->
<g fill="none" stroke="#101080" stroke-width="2.3"><path d="M49.6,293.6 A9,9 0 1 0 60.4,300.4"/></g><path d="M50,290 L56.4,293.4 L50.6,297.4 Z" fill="#101080"/>
<text x="56.6" y="297.8" font-family="'Liberation Sans',sans-serif" font-size="11" textLength="12.2" lengthAdjust="spacingAndGlyphs" fill="#101080">90</text>
<!-- rotate ccw -->
<g fill="none" stroke="#101080" stroke-width="2.3"><path d="M60.2,323.8 A9,9 0 1 1 49.2,330.6"/></g><path d="M59.8,320.2 L53.4,323.6 L59.2,327.6 Z" fill="#101080"/>
<text x="41.6" y="328" font-family="'Liberation Sans',sans-serif" font-size="11" textLength="12.2" lengthAdjust="spacingAndGlyphs" fill="#101080">90</text>
</svg>

<div id="win"></div>
</body>
</html>
